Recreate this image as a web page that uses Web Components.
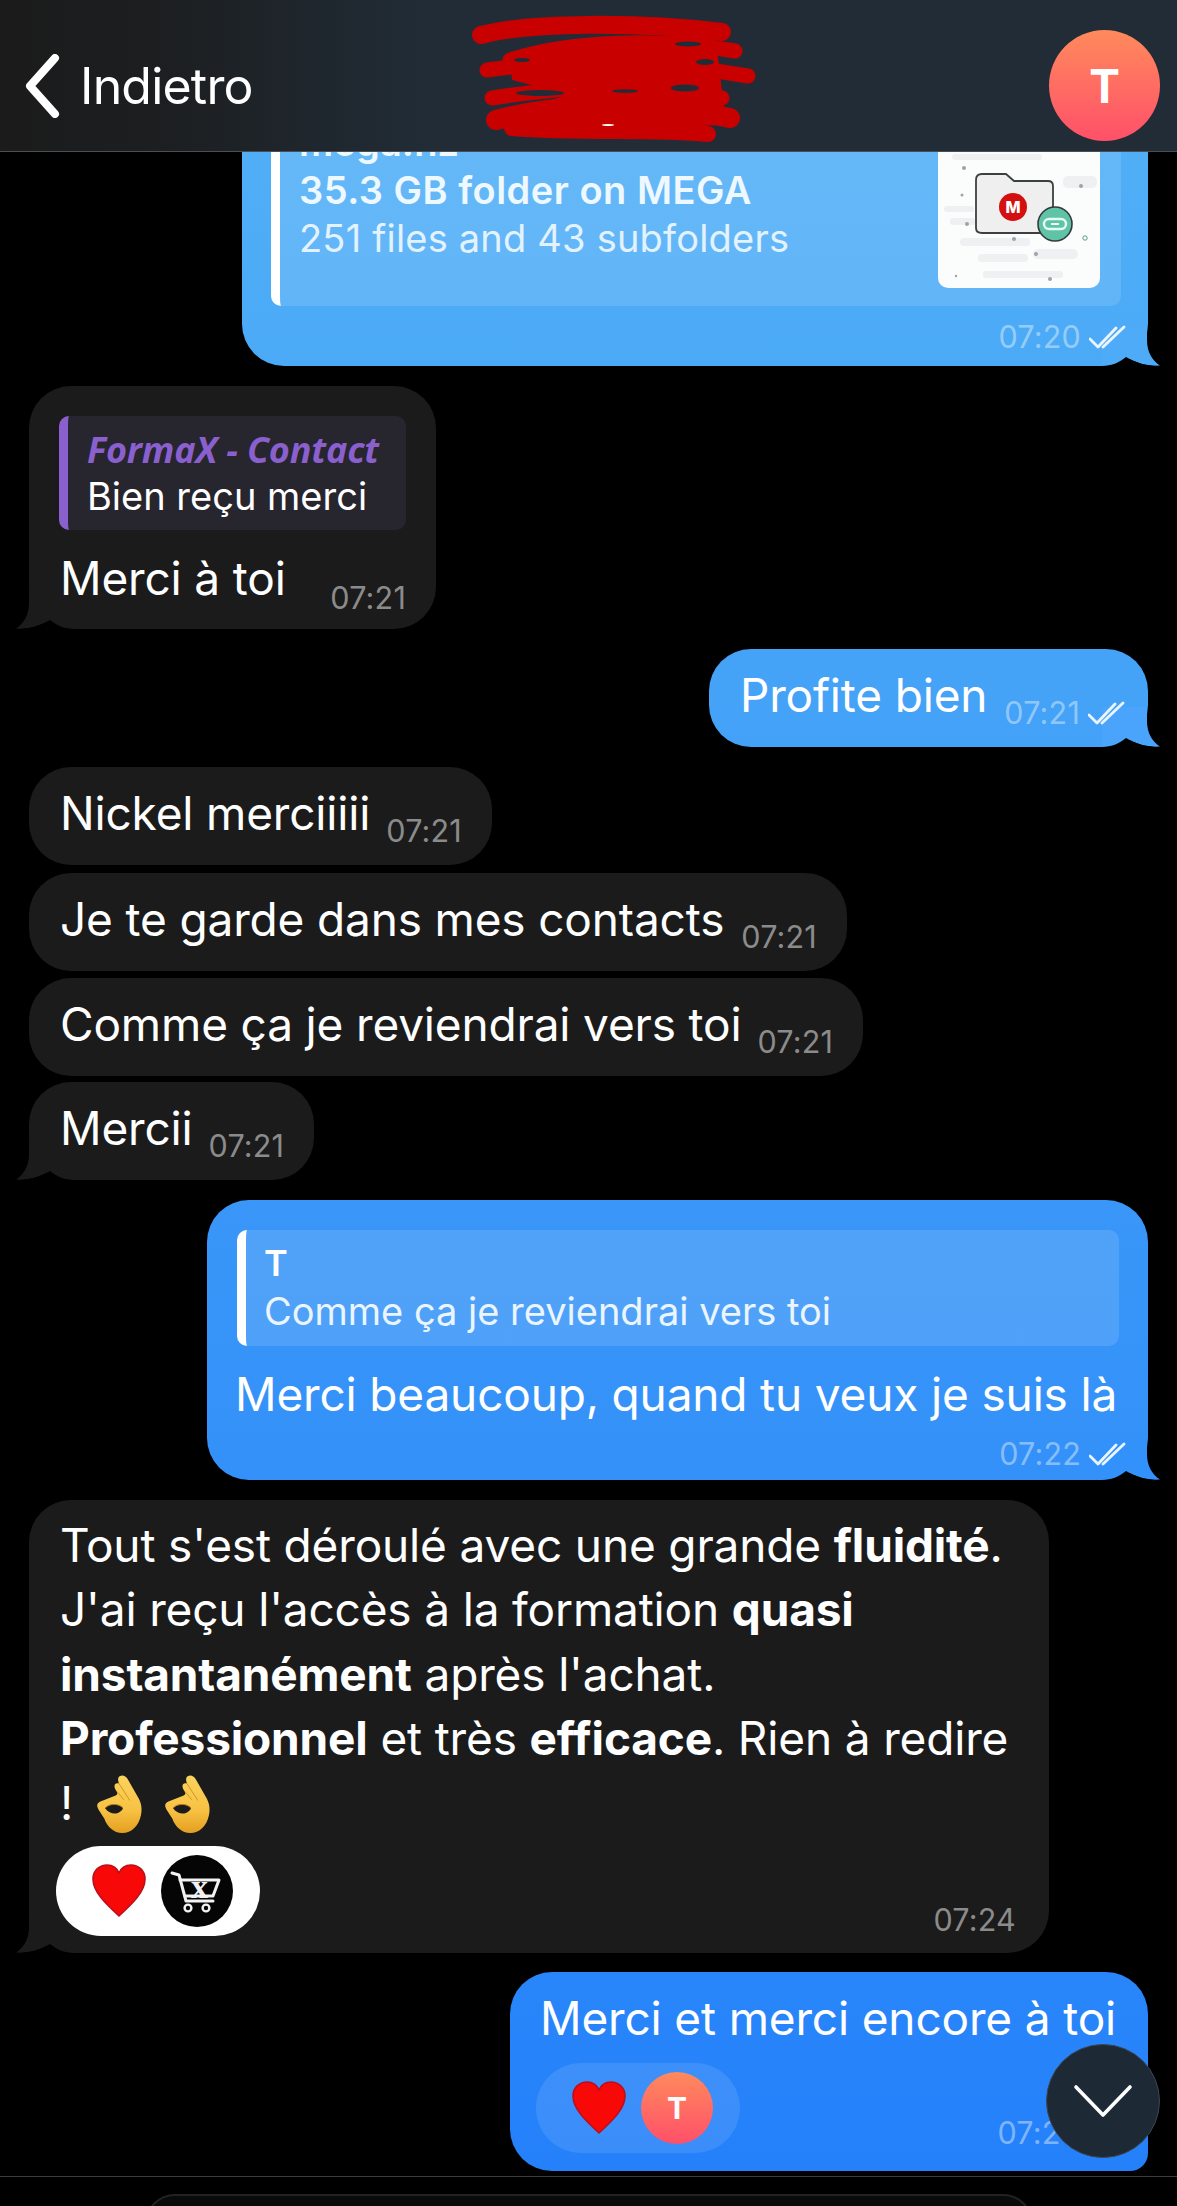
<!DOCTYPE html>
<html lang="fr"><head><meta charset="utf-8"><title>Chat</title>
<style>
html,body{margin:0;padding:0;background:#000}
body{width:1177px;height:2206px;overflow:hidden;font-family:Inter,"Noto Sans",sans-serif;color:#fff}
b{font-weight:700}
</style></head><body>
<chat-app>
  <chat-header></chat-header>
  <chat-list>
    <chat-bubble side="out" tail style="--tail:#4dabf8;--pt:30px;--pb:0px;--pl:29px;--pr:27px;width:906px">
      <chat-quote side="out" style="width:850px;--qp:8px 21px 18px 19px">
        <div style="display:flex;justify-content:space-between;align-items:flex-start">
          <div style="font-size:38px;line-height:48px;color:#eef8ff;margin-top:-8px;letter-spacing:.15px"><div style="font-weight:600">mega.nz</div><div style="font-weight:600;letter-spacing:.5px">35.3 GB folder on MEGA</div><div style="color:#e2f2ff;letter-spacing:.2px">251 files and 43 subfolders</div></div>
          <mega-thumb></mega-thumb>
        </div>
      </chat-quote>
      <msg-foot style="height:60px;margin-right:-6px"><msg-time out>07:20</msg-time></msg-foot>
    </chat-bubble>

    <chat-bubble side="in" tail style="--pt:30px;--pb:0;--pl:30px;--pr:30px;width:407px">
      <chat-quote side="in" style="width:347px">
        <div style="font:italic 700 36px/47px 'Open Sans',sans-serif;color:#8a60cf">FormaX - Contact</div>
        <div style="font-size:38px;line-height:47px;letter-spacing:0">Bien reçu merci</div>
      </chat-quote>
      <msg-line gap="44" style="padding:16px 0 19px 1px"><span>Merci à toi</span><msg-time style="margin-bottom:-4px">07:21</msg-time></msg-line>
    </chat-bubble>

    <chat-bubble side="out" tail style="--pr:22px"><msg-line gap="17"><span>Profite bien</span><msg-time out>07:21</msg-time></msg-line></chat-bubble>

    <chat-bubble side="in" style="--mt:20px"><msg-line gap="16"><span>Nickel merciiiii</span><msg-time>07:21</msg-time></msg-line></chat-bubble>
    <chat-bubble side="in" style="--mt:8px"><msg-line gap="17"><span>Je te garde dans mes contacts</span><msg-time>07:21</msg-time></msg-line></chat-bubble>
    <chat-bubble side="in" style="--mt:7px"><msg-line gap="16"><span>Comme ça je reviendrai vers toi</span><msg-time>07:21</msg-time></msg-line></chat-bubble>
    <chat-bubble side="in" tail style="--mt:6px"><msg-line gap="16"><span>Mercii</span><msg-time>07:21</msg-time></msg-line></chat-bubble>

    <chat-bubble side="out" tail style="--tail:#3391fb;--pt:30px;--pb:0;--pl:30px;--pr:29px;--mt:20px;width:941px">
      <chat-quote side="out" style="width:882px;--qp:10px 0 10px 18px">
        <div style="font-size:36px;line-height:47px;font-weight:600">T</div>
        <div style="font-size:38px;line-height:49px;color:#eaf5ff;letter-spacing:0">Comme ça je reviendrai vers toi</div>
      </chat-quote>
      <div style="font-size:var(--fs);line-height:64px;margin:16px 0 0 -2px;white-space:nowrap">Merci beaucoup, quand tu veux je suis là</div>
      <msg-foot style="height:54px;margin-right:-8px"><msg-time out>07:22</msg-time></msg-foot>
    </chat-bubble>

    <chat-bubble side="in" tail style="--pt:13px;--pb:17px;--pl:31px;--pr:33px;--mt:20px;width:1020px">
      <div style="font-size:var(--fs);line-height:64.5px;white-space:nowrap">Tout s'est déroulé avec une grande <b>fluidité</b>.<br>J'ai reçu l'accès à la formation <b>quasi</b><br><b>instantanément</b> après l'achat.<br><b>Professionnel</b> et très <b>efficace</b>. Rien à redire<br>! <ok-hand style="margin-left:11px"></ok-hand><ok-hand style="margin-left:23px"></ok-hand></div>
      <div style="display:flex;justify-content:space-between;align-items:flex-end;margin:11px 0 0 -4px">
        <react-pill light><heart-icon></heart-icon><cart-avatar></cart-avatar></react-pill>
        <msg-time style="margin-bottom:0">07:24</msg-time>
      </div>
    </chat-bubble>

    <chat-bubble side="out" style="--pt:14px;--pb:18px;--pl:30px;--pr:22px;--mt:19px;--br:18px;width:638px">
      <div style="font-size:var(--fs);line-height:64px;white-space:nowrap">Merci et merci encore à toi</div>
      <div style="display:flex;justify-content:space-between;align-items:flex-end;margin:13px 0 0 -4px">
        <react-pill><heart-icon></heart-icon><user-avatar size="72"></user-avatar></react-pill>
        <msg-time out style="margin-bottom:4px">07:24</msg-time>
      </div>
    </chat-bubble>
  </chat-list>
  <chat-composer></chat-composer>
  <scroll-button></scroll-button>
</chat-app>
<script>
const def=(name,html,init)=>customElements.define(name,class extends HTMLElement{
  constructor(){super();this.attachShadow({mode:'open'});}
  connectedCallback(){ if(this._d)return; this._d=1; this.shadowRoot.innerHTML=typeof html==='function'?html(this):html; if(init)init(this);}
});
def('chat-app',`<style>:host{display:block;position:relative;width:1177px;height:2206px;--fs:46px;overflow:hidden;letter-spacing:-.16px}</style><slot></slot>`);

def('chat-header',`<style>
:host{display:flex;align-items:center;height:152px;box-sizing:border-box;padding-top:20px;border-bottom:1px solid #4a4f55;background:linear-gradient(90deg,#1b1b1b 0,#1c1e20 13%,#212c36 36%,#212c36 100%);position:relative;z-index:2}
.back{display:flex;align-items:center;gap:20px;box-sizing:border-box;width:460px;padding-left:24px;font-size:50px;letter-spacing:-.8px;color:#fff}
.sc{display:block;align-self:flex-start;margin-top:-10px}
user-avatar{margin-left:auto;margin-right:17px}
</style>
<div class="back"><svg width="36" height="64" viewBox="0 0 36 64"><path d="M31 4 L6 32 L31 60" fill="none" stroke="#fff" stroke-width="8" stroke-linecap="round" stroke-linejoin="round"/></svg><span>Indietro</span></div>
<svg class="sc" width="310" height="140" viewBox="0 0 310 140">
<g fill="none" stroke="#c80000" stroke-linecap="round" stroke-linejoin="round">
<path d="M21 25 C70 12 180 12 262 22" stroke-width="18"/>
<path d="M50 50 C110 30 200 28 275 41" stroke-width="15"/>
<path d="M27 60 C120 48 210 52 288 66" stroke-width="15"/>
<path d="M32 88 C110 76 200 70 262 88" stroke-width="15"/>
<path d="M36 110 C100 92 200 92 270 108" stroke-width="20"/>
<path d="M52 118 C120 124 190 118 248 124" stroke-width="16"/></g>
<path d="M50 42 L255 22 L266 115 L45 122 L50 100 L110 85 L52 70Z" fill="#c80000"/>
<g fill="#212c36"><ellipse cx="80" cy="83" rx="24" ry="3"/><ellipse cx="165" cy="81" rx="13" ry="1.8"/><ellipse cx="225" cy="78" rx="14" ry="3.5"/><ellipse cx="228" cy="34" rx="13" ry="2.5"/><ellipse cx="245" cy="52" rx="9" ry="3"/><ellipse cx="62" cy="50" rx="8" ry="2"/></g>
<ellipse cx="148" cy="115" rx="6" ry="1" fill="#fff"/>
</svg>
<user-avatar size="111"></user-avatar>`);

def('user-avatar',h=>{const s=+h.getAttribute('size');return `<style>:host{display:flex;flex:none;align-items:center;justify-content:center;width:${s}px;height:${s}px;border-radius:50%;background:linear-gradient(#ff8a5c,#ff5069);color:#fff;font-weight:700;font-size:${Math.round(s*.41)}px}</style>T`});

def('chat-list',`<style>:host{display:flex;flex-direction:column;justify-content:flex-end;height:2024px;overflow:hidden;padding-bottom:5px;box-sizing:border-box}</style><slot></slot>`);

const tail=`<svg class="tail" width="60" height="42" viewBox="0 0 60 42"><path class="a" d="M15 0 L15 14 C15 26 10 34 2 39.6 C14 40.4 26 37 36 31 C42 36 50 40 60 40 L60 0Z"/><path d="M1 40 C14 40.4 26 37 36 31 C42 36 50 40 60 40 L60 42 L1 42Z" fill="#000"/></svg>`;
def('chat-bubble',h=>{const out=h.getAttribute('side')==='out';return `<style>
:host{display:block;position:relative;isolation:isolate;flex:none;box-sizing:border-box;width:fit-content;font-size:var(--fs);
margin-top:var(--mt,20px);
${out?'align-self:flex-end;margin-right:29px;background:linear-gradient(#53b2f6 0,#2480fa 2206px) fixed;':'align-self:flex-start;margin-left:29px;background:#1b1b1c;'}
padding:var(--pt,14px) var(--pr,30px) var(--pb,20px) var(--pl,31px);border-radius:42px;${out?'border-bottom-right-radius:var(--br,42px)':''}}
.tail{position:absolute;z-index:-1;bottom:-2px;${out?'right:-14px;transform:scaleX(-1)':'left:-15px'}}
.a{fill:${out?'var(--tail,#4aa4fb)':'#1b1b1c'}}
</style><slot></slot>${h.hasAttribute('tail')?tail:''}`});

def('chat-quote',h=>{const out=h.getAttribute('side')==='out';return `<style>
:host{display:block;box-sizing:border-box;padding:var(--qp,10px 0 10px 19px);border-left:9px solid ${out?'#fff':'#8a60cf'};border-radius:10px;background:${out?'rgba(255,255,255,.12)':'#27252e'}}
</style><slot></slot>`});

def('msg-line',h=>`<style>:host{display:flex;align-items:flex-end;justify-content:space-between;gap:${h.getAttribute('gap')}px;white-space:nowrap}
::slotted(span){line-height:64px}</style><slot></slot>`);
def('msg-foot',`<style>:host{display:flex;justify-content:flex-end;align-items:center}</style><slot></slot>`);

def('msg-time',h=>{const out=h.hasAttribute('out');return `<style>:host{display:inline-flex;align-items:center;gap:8px;flex:none;margin-bottom:-2px;font-size:30.5px;line-height:32px;letter-spacing:.2px;color:${out?'rgba(255,255,255,.42)':'#8b8b8b'}}</style><slot></slot>${out?`<svg width="38" height="24" viewBox="0 0 38 24"><path d="M1 14 L9 22 L27 3 M14 22 L35 2" fill="none" stroke="#eaf5ff" stroke-width="2.8" stroke-linecap="round" stroke-linejoin="round"/></svg>`:''}`});

def('mega-thumb',`<style>:host{display:block;flex:none;width:162px;height:162px;background:#fbfcfc;border-radius:10px;overflow:hidden}</style>
<svg width="162" height="162" viewBox="0 0 162 162">
<g fill="#eef0f2"><rect x="10" y="10" width="50" height="5" rx="2"/><rect x="65" y="10" width="80" height="6" rx="3"/><rect x="14" y="28" width="90" height="6" rx="3"/><rect x="125" y="50" width="34" height="12" rx="5"/><rect x="6" y="80" width="30" height="6" rx="3"/><rect x="12" y="92" width="26" height="7" rx="3"/><rect x="22" y="112" width="70" height="8" rx="4"/><rect x="40" y="128" width="50" height="8" rx="4"/><rect x="95" y="123" width="45" height="10" rx="5"/><rect x="45" y="145" width="80" height="7" rx="3"/></g>
<path d="M38 54 Q38 48 44 48 L68 48 L76 55 L110 55 Q115 55 115 60 L115 102 Q115 107 110 107 L44 107 Q38 107 38 102Z" fill="#efefef" stroke="#3c4040" stroke-width="1.8"/>
<circle cx="75" cy="81" r="14" fill="#d40f10"/><text x="75" y="87" text-anchor="middle" font-family="Inter" font-weight="800" font-size="16" fill="#fff">M</text>
<circle cx="117" cy="98" r="17" fill="#5fc4a6" stroke="#343a3a" stroke-width="1.6"/>
<rect x="106" y="93" width="22" height="10" rx="5" fill="none" stroke="#e8f8f2" stroke-width="2.4"/><path d="M112 98 H122" stroke="#5fc4a6" stroke-width="3"/><path d="M113 98 H121" stroke="#e8f8f2" stroke-width="2"/>
<g fill="#9aa5ab"><circle cx="85" cy="14" r="2"/><circle cx="26" cy="42" r="2"/><circle cx="24" cy="69" r="1.5"/><circle cx="29" cy="98" r="2"/><circle cx="76" cy="113" r="2"/><circle cx="98" cy="128" r="2"/><circle cx="112" cy="153" r="2"/><circle cx="143" cy="60" r="2"/><circle cx="18" cy="150" r="1.2"/></g>
<circle cx="147" cy="112" r="2.2" fill="none" stroke="#5a9a90"/>
</svg>`);

def('ok-hand',`<style>:host{display:inline-block;vertical-align:-13px;width:45px;height:58px;line-height:0}</style>
<svg width="45" height="58" viewBox="0 0 135 175"><defs><linearGradient id="g" x1="0" y1="0" x2="0" y2="1"><stop offset="0" stop-color="#fbd35e"/><stop offset=".6" stop-color="#f7c244"/><stop offset="1" stop-color="#e49f1f"/></linearGradient></defs>
<path d="M68 4 C76 -2 86 2 92 12 L126 72 C134 88 136 104 132 122 C126 152 104 175 76 175 C50 175 30 156 22 132 L4 104 C-3 92 0 84 10 80 L56 62 C60 60 62 58 60 50 C54 44 50 34 54 28 C57 24 62 24 66 26 C62 16 62 8 68 4Z" fill="url(#g)"/>
<path d="M66 26 L98 76 M60 50 L80 74" stroke="#d8941c" stroke-width="3" fill="none" stroke-linecap="round"/>
<path d="M24 100 C34 86 66 84 78 100 C70 118 42 124 24 100Z" fill="#1b1b1c"/>
<path d="M24 100 C34 86 66 84 78 100" stroke="#b9791a" stroke-width="3" fill="none"/>
</svg>`);

def('heart-icon',`<style>:host{display:block;width:54px;height:54px;flex:none;line-height:0}</style>
<svg width="54" height="54" viewBox="0 0 54 54"><path d="M27 52 C14 40 1 28 1 15 C1 6 8 1 15 1 C21 1 25 4 27 9 C29 4 33 1 39 1 C46 1 53 6 53 15 C53 28 40 40 27 52Z" fill="#f90808" stroke="#b8101c" stroke-width="1.6" stroke-linejoin="round"/></svg>`);

def('cart-avatar',`<style>:host{display:block;width:72px;height:72px;flex:none;line-height:0}</style>
<svg width="72" height="72" viewBox="0 0 72 72"><circle cx="36" cy="36" r="36" fill="#050505"/>
<g fill="none" stroke="#f2f2f2" stroke-linejoin="round" stroke-linecap="round"><path d="M11 18 L18 20 L25 46 L52 46" stroke-width="3"/><path d="M19 25 L58 25 L52 41 L24 41" stroke-width="3"/><circle cx="27" cy="53" r="3.4" stroke-width="2.4"/><circle cx="45" cy="53" r="3.4" stroke-width="2.4"/></g>
<text x="38.5" y="43" text-anchor="middle" font-family="Liberation Serif" font-weight="700" font-size="34" fill="#f2f2f2">x</text></svg>`);

def('react-pill',h=>`<style>:host{display:flex;align-items:center;box-sizing:border-box;width:204px;height:90px;border-radius:45px;padding:0 27px 0 36px;justify-content:space-between;flex:none;background:${h.hasAttribute('light')?'#fff':'rgba(255,255,255,.1)'}}</style><slot></slot>`);

def('chat-composer',`<style>:host{display:block;height:30px;box-sizing:border-box;border-top:1px solid #3c3c3c;padding:17px 144px 0 145px;overflow:hidden;background:#000}
div{height:60px;border:2px solid #222;border-radius:30px;background:#0a0a0a}</style><div></div>`);

def('scroll-button',`<style>:host{position:absolute;right:17px;bottom:48px;z-index:3;width:114px;height:114px;box-sizing:border-box;border-radius:50%;background:#1d2935;border:1.5px solid #3b4650;display:flex;align-items:center;justify-content:center}</style>
<svg width="60" height="36" viewBox="0 0 60 36"><path d="M3 4 L30 32 L57 4" fill="none" stroke="#fff" stroke-width="3.6" stroke-linecap="round" stroke-linejoin="round"/></svg>`);
</script>
</body></html>
